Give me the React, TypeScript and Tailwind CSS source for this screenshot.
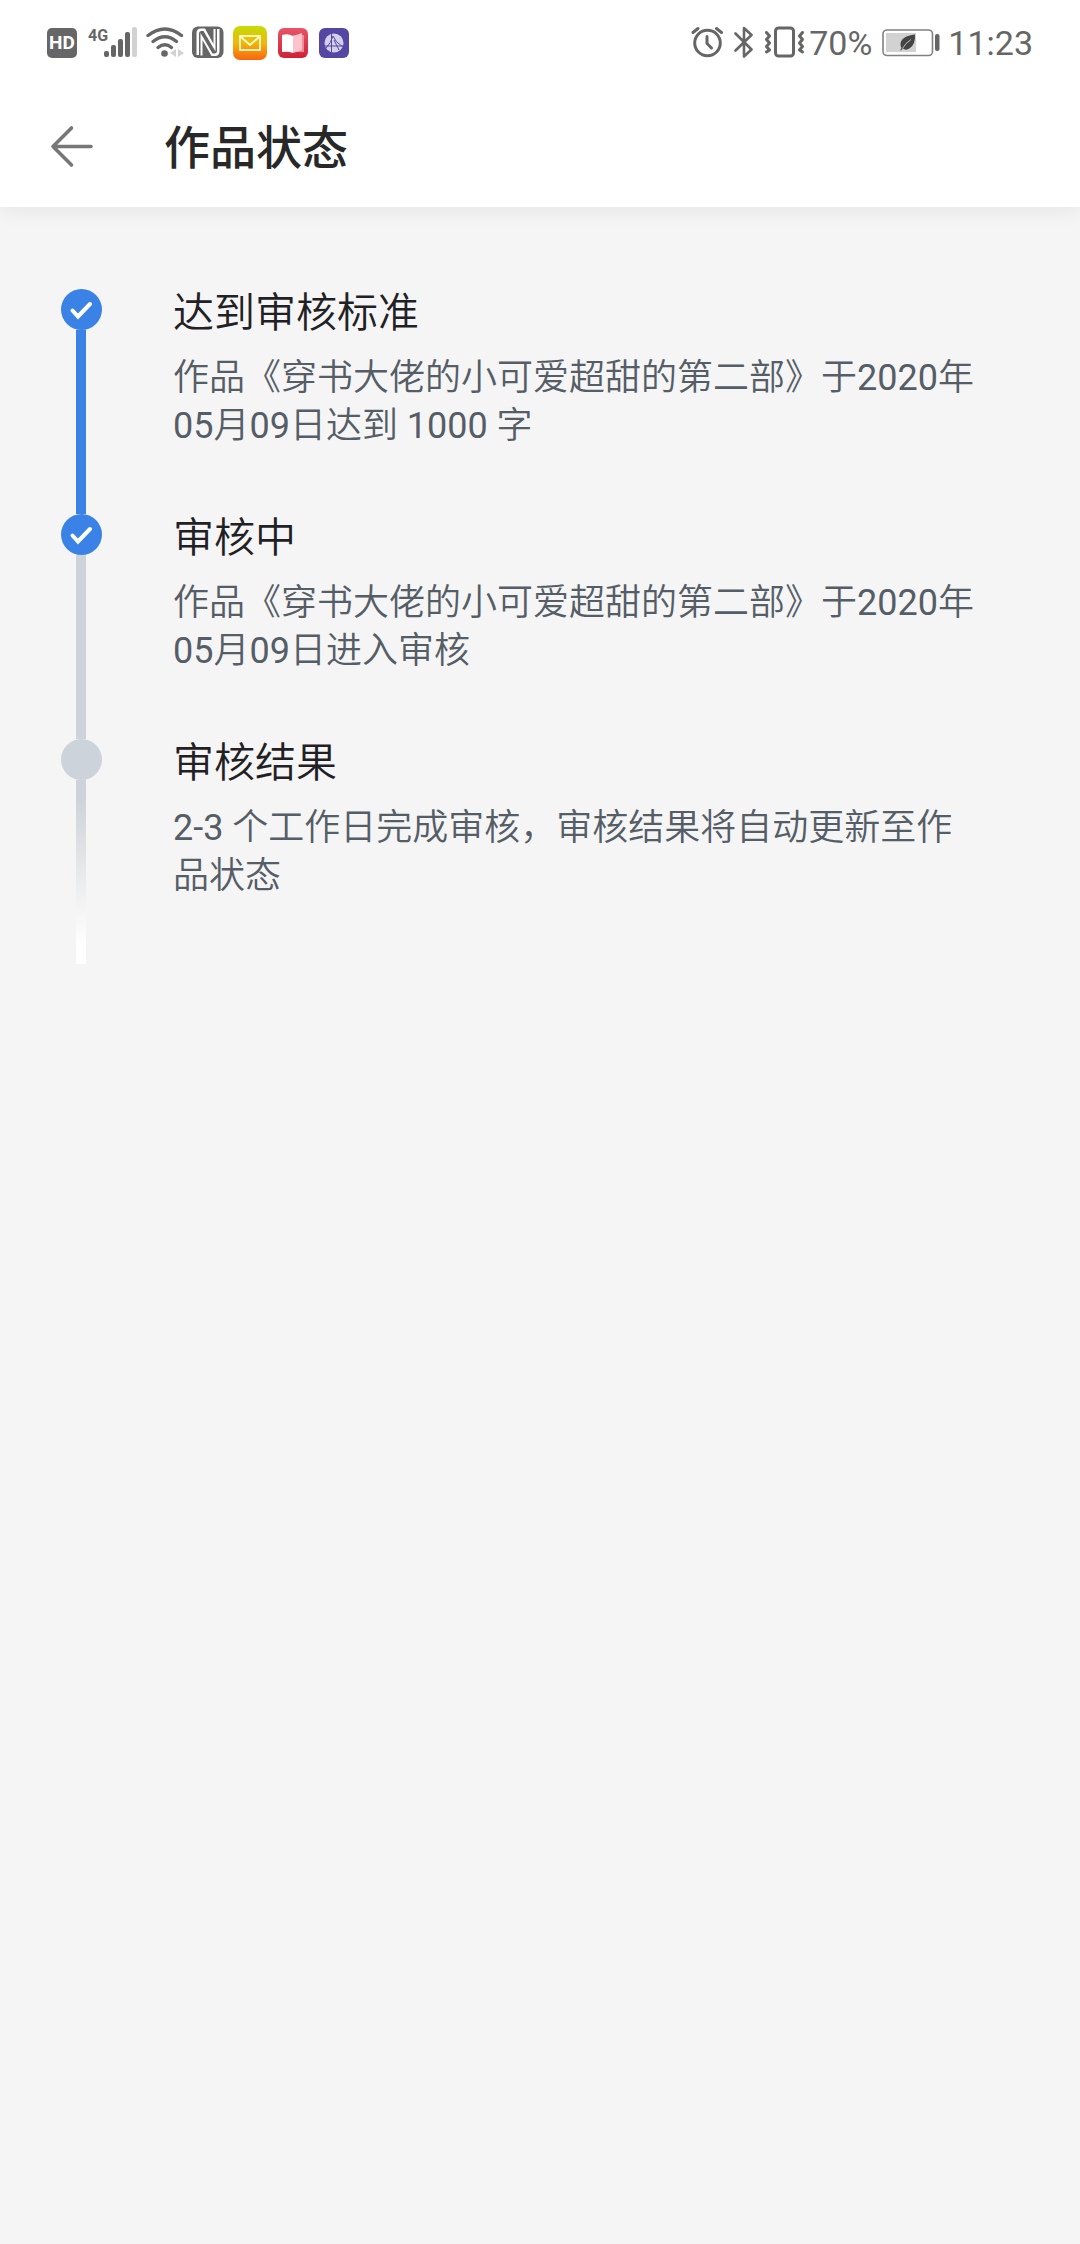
import React from "react";
import clsx from "clsx";

type StepStatus = "done" | "current" | "pending";

interface Step {
  id: number;
  title: string;
  description: string;
  status: StepStatus;
}

const steps: Step[] = [
  {
    id: 1,
    title: "达到审核标准",
    description:
      "作品《穿书大佬的小可爱超甜的第二部》于2020年05月09日达到 1000 字",
    status: "done",
  },
  {
    id: 2,
    title: "审核中",
    description: "作品《穿书大佬的小可爱超甜的第二部》于2020年05月09日进入审核",
    status: "current",
  },
  {
    id: 3,
    title: "审核结果",
    description: "2-3 个工作日完成审核，审核结果将自动更新至作品状态",
    status: "pending",
  },
];

function SignalIcon() {
  return (
    <svg width="50" height="34" viewBox="88 26 50 34" fill="#666">
      <text
        x="88"
        y="41"
        fontSize="16"
        fontWeight="700"
        fontFamily="Roboto, sans-serif"
      >
        4G
      </text>
      <rect x="104" y="51" width="5" height="6" rx="2" />
      <rect x="111" y="45" width="5" height="12" rx="2" />
      <rect x="118" y="39" width="5" height="18" rx="2" />
      <rect x="125" y="32" width="5" height="25" rx="2" />
      <rect x="132" y="27" width="5" height="30" rx="2" fill="#d2d2d2" />
    </svg>
  );
}

function WifiIcon() {
  return (
    <svg width="38" height="34" viewBox="146 26 38 34" fill="none">
      <g stroke="#666" strokeWidth="3.4" strokeLinecap="round">
        <path d="M148 35.500Q165 22.500 181.500 35.500" />
        <path d="M153 41.500Q165 32 176.500 41.500" />
        <path d="M158 47.500Q165 42 171.500 47.500" />
      </g>
      <circle cx="164.500" cy="53.500" r="3.300" fill="#666" />
      <path d="M176 49v8l-6-4zM178 49v8l6-4z" fill="#d2d2d2" />
    </svg>
  );
}

function NfcIcon() {
  return (
    <svg width="32" height="34" viewBox="192 26 32 34">
      <rect x="192" y="26.500" width="31.500" height="31.500" rx="6" fill="#666" />
      <path
        d="M196.500 55V33Q196.500 28.500 201 28.500H205L213.500 44V29H215.500V51.500L203.500 31H201.500Q199 31 199 34V55Z"
        fill="#fff"
      />
      <path
        d="M219.500 29V51Q219.500 56 215 56H211.500L202.500 40V55.500H200.500V33L212.500 53.500H214.500Q217 53.500 217 50.500V29Z"
        fill="#fff"
      />
    </svg>
  );
}

function MailIcon() {
  return (
    <svg width="34" height="34" viewBox="0 0 34 34" fill="none">
      <defs>
        <linearGradient id="mail" x1="0" y1="0" x2="0" y2="1">
          <stop offset="0" stopColor="#c3dc08" />
          <stop offset="0.5" stopColor="#f0b80c" />
          <stop offset="1" stopColor="#f9640f" />
        </linearGradient>
      </defs>
      <rect width="34" height="34" rx="7" fill="url(#mail)" />
      <rect x="7" y="10" width="20" height="14" stroke="#fffbc4" strokeWidth="1.800" />
      <path d="M8 11l9 8 9-8" stroke="#fffbc4" strokeWidth="1.800" />
    </svg>
  );
}

function BookIcon() {
  return (
    <svg width="30" height="30" viewBox="0 0 30 30">
      <defs>
        <linearGradient id="book" x1="0" y1="0" x2="0" y2="1">
          <stop offset="0" stopColor="#e85468" />
          <stop offset="1" stopColor="#cf2137" />
        </linearGradient>
      </defs>
      <rect width="30" height="30" rx="6" fill="url(#book)" />
      <path d="M15 7h11v17H15z" fill="#ef8c98" />
      <path d="M15 8l9-3v17l-9 3z" fill="#fbc4ca" />
      <path d="M4 7q6-2 11 1v17q-5-2-11-1z" fill="#fff" />
    </svg>
  );
}

function BrowserIcon() {
  return (
    <svg width="30" height="30" viewBox="0 0 30 30" fill="none">
      <rect width="30" height="30" rx="6" fill="#5546a4" />
      <circle cx="15" cy="15" r="9.500" fill="#d3d0ea" />
      <g stroke="#5546a4" strokeWidth="1">
        <path d="M5.500 18H24M12.500 6V24M14 8Q16 14 24 19M14 8Q12 15 7 20M15 12L20 22" />
      </g>
    </svg>
  );
}

function AlarmIcon() {
  return (
    <svg
      width="32"
      height="34"
      viewBox="691 26 32 34"
      fill="none"
      stroke="#666"
      strokeLinecap="round"
    >
      <circle cx="707.500" cy="43" r="12.800" strokeWidth="3" />
      <path d="M707 36.500V43.500L711.500 48" strokeWidth="3" />
      <path d="M693 32.500L698 28.500M716.500 28.500L721.500 32.500" strokeWidth="3" />
    </svg>
  );
}

function BluetoothIcon() {
  return (
    <svg
      width="20"
      height="34"
      viewBox="734 26 20 34"
      fill="none"
      stroke="#666"
      strokeWidth="2.600"
      strokeLinejoin="round"
      strokeLinecap="round"
    >
      <path d="M735.500 33.500L751.500 49.500L744 56.500V28L751.500 35L735.500 50.500" />
    </svg>
  );
}

function VibrateIcon() {
  return (
    <svg
      width="40"
      height="34"
      viewBox="765 26 40 34"
      fill="none"
      stroke="#666"
      strokeWidth="3"
      strokeLinejoin="round"
      strokeLinecap="round"
    >
      <rect x="775.500" y="28" width="18" height="28" rx="3" />
      <path d="M766.500 32.500l3 3.500-3 3.500 3 3.500-3 3.500 3 3.500-3 2" />
      <path d="M802.500 32.500l-3 3.500 3 3.500-3 3.500 3 3.500-3 3.500 3 2" />
    </svg>
  );
}

function BatteryIcon() {
  return (
    <svg width="58" height="34" viewBox="882 26 58 34" fill="none">
      <rect
        x="883"
        y="30"
        width="49.500"
        height="25.500"
        rx="4"
        stroke="#808080"
        strokeWidth="1.600"
      />
      <rect x="886" y="33" width="30" height="19" fill="#d2d2d2" />
      <rect x="935" y="34" width="4.500" height="17" rx="2" fill="#666" />
      <path
        d="M915 34.500Q901 36 900.500 44Q900.300 46.500 901.500 48L900 50.500L901.500 50L903 48.500Q906 51 910 48Q915.500 44 915 34.500Z"
        fill="#444"
      />
      <path d="M902.500 48.500Q905 43.500 911 39.500" stroke="#c8c8c8" strokeWidth="0.900" />
    </svg>
  );
}

function CheckIcon() {
  return (
    <svg width="41" height="41" viewBox="0 0 41 41" fill="none">
      <path
        d="M11.500 21.500L17 27.500L29 15"
        stroke="#fff"
        strokeWidth="4"
        strokeLinecap="round"
      />
    </svg>
  );
}

function StatusBar() {
  return (
    <div className="flex h-[86px] items-center justify-between px-[47px] text-[34px] leading-[34px] text-[#666]">
      <div className="flex items-center">
        <span className="mr-[11px] flex size-[30px] items-center justify-center rounded-[5px] bg-[#666] text-[19px] font-bold text-white">
          HD
        </span>
        <SignalIcon />
        <div className="ml-2 flex items-center gap-2">
          <WifiIcon />
          <NfcIcon />
        </div>
        <div className="ml-[9px] flex items-center gap-[11px]">
          <MailIcon />
          <BookIcon />
          <BrowserIcon />
        </div>
      </div>
      <div className="flex items-center">
        <div className="flex items-center gap-[11px]">
          <AlarmIcon />
          <BluetoothIcon />
          <VibrateIcon />
        </div>
        <span className="ml-1">70%</span>
        <span className="ml-[10px]">
          <BatteryIcon />
        </span>
        <time className="ml-2">11:23</time>
      </div>
    </div>
  );
}

// digits keep the regular weight, Chinese text is a bit lighter
function MixedText({ text }: { text: string }) {
  return (
    <>
      {text.split(/([\d-]+)/).map((part, index) =>
        index % 2 === 1 ? (
          <span key={index} className="font-normal">
            {part}
          </span>
        ) : (
          part
        )
      )}
    </>
  );
}

function TimelineItem({ step }: { step: Step }) {
  const reached = step.status !== "pending";

  return (
    <li className="flex gap-[71px]">
      <div className="flex w-[41px] shrink-0 flex-col">
        <span
          className={clsx(
            "size-[41px] shrink-0 rounded-full",
            reached ? "bg-[#3b82e6]" : "bg-[#cdd3da]"
          )}
        >
          {reached && <CheckIcon />}
        </span>
        <span
          className={clsx(
            "ml-[15px] w-[10px] flex-1",
            step.status === "done" && "bg-[#3b82e6]",
            step.status === "current" && "bg-[#cdd3d8]",
            step.status === "pending" &&
              "bg-linear-to-b from-[#cdd3d8] from-10% via-[#f4f4f5] via-70% to-white to-90%"
          )}
        />
      </div>
      <div className="flex-1 pb-16">
        <h2 className="mb-4 text-[41px] leading-[49px] font-[350] text-[#1f2124]">
          {step.title}
        </h2>
        <p className="text-[36px] leading-[48px] font-[350] text-[#555d67]">
          <MixedText text={step.description} />
        </p>
      </div>
    </li>
  );
}

function App() {
  return (
    <div
      lang="zh-CN"
      className="min-h-screen bg-[#f5f5f5] font-[Roboto,'Noto_Sans_CJK_SC',sans-serif]"
    >
      <header className="bg-white shadow-[0_2px_20px_rgba(0,0,0,0.08)]">
        <StatusBar />
        <div className="flex h-[121px] items-center pl-12">
          <button type="button" aria-label="返回" className="mr-[70px] pb-[2px]">
            <svg
              width="46"
              height="46"
              viewBox="0 0 46 46"
              fill="none"
              stroke="#777"
              strokeWidth="3.600"
              strokeLinecap="round"
              strokeLinejoin="round"
            >
              <path d="M23.500 5L5 23.500L23.500 42M5 23.500H43" />
            </svg>
          </button>
          <h1 className="pt-[2px] text-[46px] leading-[60px] font-medium text-[#282828]">
            作品状态
          </h1>
        </div>
      </header>
      <main className="pt-[82px] pr-[100px] pl-[61px]">
        <ol>
          {steps.map((step) => (
            <TimelineItem key={step.id} step={step} />
          ))}
        </ol>
      </main>
    </div>
  );
}

export default App;
